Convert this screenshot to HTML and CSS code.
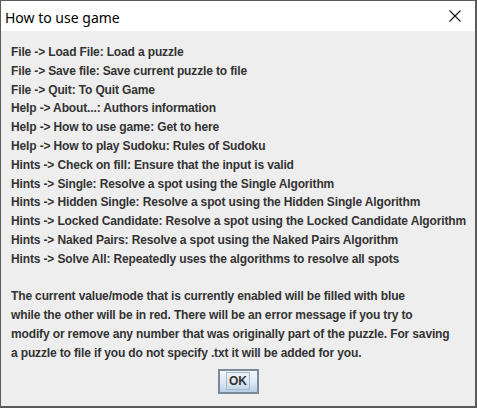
FILE: index.html
```html
<!DOCTYPE html>
<html>
<head>
<meta charset="utf-8">
<link rel="stylesheet" href="styles.css">
</head>
<body>
<div class="window">
  <div class="titlebar">
    <span class="title">How to use game</span>
    <svg class="close" width="14" height="14" viewBox="0 0 14 14"><path d="M1.5 1.5 L12.5 12.5 M12.5 1.5 L1.5 12.5" stroke="#111" stroke-width="1.1" fill="none"/></svg>
  </div>
  <div class="content">
    <div class="text">
      <div class="line">File -&gt; Load File: Load a puzzle</div>
      <div class="line">File -&gt; Save file: Save current puzzle to file</div>
      <div class="line">File -&gt; Quit: To Quit Game</div>
      <div class="line">Help -&gt; About...: Authors information</div>
      <div class="line">Help -&gt; How to use game: Get to here</div>
      <div class="line">Help -&gt; How to play Sudoku: Rules of Sudoku</div>
      <div class="line">Hints -&gt; Check on fill: Ensure that the input is valid</div>
      <div class="line">Hints -&gt; Single: Resolve a spot using the Single Algorithm</div>
      <div class="line">Hints -&gt; Hidden Single: Resolve a spot using the Hidden Single Algorithm</div>
      <div class="line">Hints -&gt; Locked Candidate: Resolve a spot using the Locked Candidate Algorithm</div>
      <div class="line">Hints -&gt; Naked Pairs: Resolve a spot using the Naked Pairs Algorithm</div>
      <div class="line">Hints -&gt; Solve All: Repeatedly uses the algorithms to resolve all spots</div>
      <div class="line">&nbsp;</div>
      <div class="line">The current value/mode that is currently enabled will be filled with blue</div>
      <div class="line">while the other will be in red. There will be an error message if you try to</div>
      <div class="line">modify or remove any number that was originally part of the puzzle. For saving</div>
      <div class="line">a puzzle to file if you do not specify .txt it will be added for you.</div>
    </div>
    <div class="actions">
      <button class="ok"><span class="focus">OK</span></button>
    </div>
  </div>
</div>
</body>
</html>
```

FILE: styles.css
```css
html, body {
  margin: 0;
  padding: 0;
  background: #eeeeee;
}

.window {
  width: 477px;
  height: 408px;
  box-sizing: border-box;
  border: 1px solid #5a5a5a;
  border-right-width: 2px;
  border-bottom-width: 2px;
  display: flex;
  flex-direction: column;
  background: #eeeeee;
}

.titlebar {
  height: 30px;
  background: #ffffff;
  display: flex;
  align-items: center;
  justify-content: space-between;
  padding: 0 13px 0 4px;
  flex: none;
}

.title {
  font-family: "Noto Sans", "Open Sans", sans-serif;
  font-size: 14px;
  color: #000;
  position: relative;
  top: 1px;
}

.close {
  display: block;
}

.content {
  flex: 1;
  padding: 12px 0 0 10px;
  display: flex;
  flex-direction: column;
}

.text {
  font-family: "Liberation Sans", Arial, sans-serif;
  font-weight: bold;
  font-size: 12px;
  letter-spacing: -0.14px;
  color: #333333;
}

.line {
  line-height: 18.8px;
  height: 18.8px;
  white-space: nowrap;
}

.actions {
  display: flex;
  justify-content: center;
  padding-top: 6px;
  padding-right: 10px;
}

.ok {
  width: 41px;
  height: 25px;
  box-sizing: border-box;
  border: 2px solid #7a8a99;
  background: linear-gradient(to bottom, #f3f7fc 0%, #dde8f3 55%, #b8cfe5 100%);
  padding: 0;
  margin: 0;
  display: flex;
  align-items: center;
  justify-content: center;
  font-family: "Liberation Sans", Arial, sans-serif;
  font-weight: bold;
  font-size: 12px;
  color: #333333;
}

.focus {
  display: block;
  border: 1px solid #a3b8cc;
  padding: 2px 2px;
  line-height: 12px;
}
```
